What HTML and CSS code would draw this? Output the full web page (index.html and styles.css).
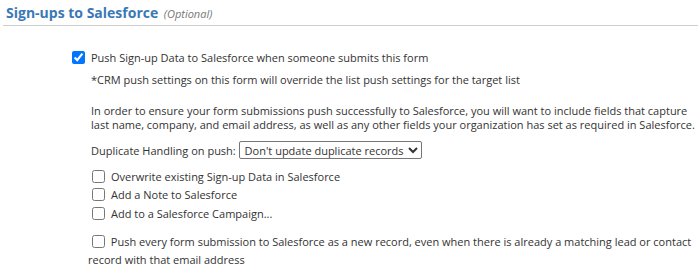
FILE: index.html
```html
<!DOCTYPE html>
<html>
<head>
<meta charset="utf-8">
<link rel="stylesheet" href="styles.css">
</head>
<body>
<section class="panel">
  <h2 class="title">Sign-ups to Salesforce <span class="optional">(Optional)</span></h2>
  <div class="content">
    <label class="row main-check"><input type="checkbox" checked><span>Push Sign-up Data to Salesforce when someone submits this form</span></label>
    <div class="sub">
      <p class="note">*CRM push settings on this form will override the list push settings for the target list</p>
      <p class="para">In order to ensure your form submissions push successfully to Salesforce, you will want to include fields that capture last name, company, and email address, as well as any other fields your organization has set as required in Salesforce.</p>
      <div class="dup">Duplicate Handling on push: <select class="sel"><option>Don't update duplicate records</option></select></div>
    </div>
    <div class="opts">
      <label class="row opt"><input type="checkbox"><span>Overwrite existing Sign-up Data in Salesforce</span></label>
      <label class="row opt"><input type="checkbox"><span>Add a Note to Salesforce</span></label>
      <label class="row opt"><input type="checkbox"><span>Add to a Salesforce Campaign...</span></label>
    </div>
    <p class="last"><input type="checkbox"> Push every form submission to Salesforce as a new record, even when there is already a matching lead or contact record with that email address</p>
  </div>
</section>
</body>
</html>
```
FILE: styles.css
```css
html, body { margin: 0; padding: 0; background: #fff; }
body {
  font-family: "Open Sans", "Noto Sans", sans-serif;
  font-size: 11px;
  color: #333;
}
.panel { padding: 0 0 0 3px; }
.title {
  margin: 0;
  padding: 3px 0 2px 3px;
  font-size: 14px;
  font-weight: bold;
  color: #3a78b6;
  border-bottom: 1px solid #cfcfcf;
  line-height: 19px;
}
.optional {
  font-size: 11px;
  font-weight: normal;
  font-style: italic;
  color: #777;
  margin-left: 2px;
}
.content { padding: 23px 0 0 65px; }
.row { display: flex; align-items: center; }
.row input { margin: 0 6px 0 4px; width: 13px; height: 13px; flex: none; }
.main-check { height: 16px; }
.sub { padding-left: 23px; }
.note { margin: 7.5px 0 0; line-height: 14px; }
.para { margin: 17px 0 0; line-height: 14px; }
.dup { margin-top: 9.5px; display: flex; align-items: center; height: 18px; white-space: pre; }
.sel {
  margin: 0;
  font-family: "Open Sans", "Noto Sans", sans-serif;
  font-size: 11px;
  color: #333;
  height: 18px;
  padding: 0 1px;
  border: 1px solid #767676;
  border-radius: 2px;
  background: #fff;
}
.opts { margin-top: 7.75px; padding-left: 20px; }
.opt { height: 18.5px; }
.last { margin: 11px 0 0 20px; line-height: 18px; }
.last input { margin: 0 3px 0 4px; width: 13px; height: 13px; vertical-align: -2px; }
```
